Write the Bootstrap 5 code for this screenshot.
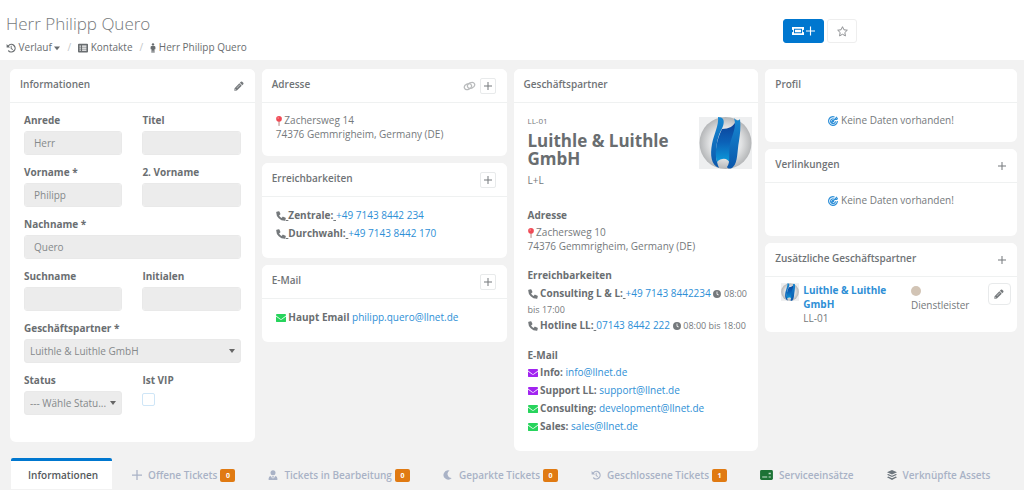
<!DOCTYPE html>
<html lang="de">
<head>
<meta charset="utf-8">
<meta name="viewport" content="width=device-width, initial-scale=1">
<title>Herr Philipp Quero</title>
<link rel="stylesheet" href="https://cdn.jsdelivr.net/npm/bootstrap@5.3.0/dist/css/bootstrap.min.css">
<style>
body{font-family:"Open Sans",sans-serif;font-size:10px;line-height:14px;color:#75797c;background:#f2f2f2}
a{color:#2e8fd6;text-decoration:none}
button{color:inherit}
strong,.form-label,.sub-title{font-weight:700;color:#6a6e71}
.ico{width:10px;height:10px;fill:currentColor;vertical-align:-2px;flex:none}
.ico-slim{width:6px}
.ico-small{width:8px}
.ico-wide{width:13px}
.page-head{background:#fff;height:60px;padding:12px 167px 0 6px}
.page-title{font-size:17px;line-height:24px;font-weight:300;color:#75797c;margin:0}
.breadcrumb{font-size:10px;line-height:16px;margin:3px 0 0;--bs-breadcrumb-item-padding-x:7px;--bs-breadcrumb-divider-color:#c3c6c8}
.breadcrumb a,.breadcrumb-item.active{color:#696d70}
.head-actions{gap:3px}
.head-btn{height:24px;padding:0;border-radius:3px;margin-top:7px;display:flex;align-items:center;justify-content:center}
.head-ticket{width:41px;background:#0077cf;border-color:#0077cf;color:#fff;gap:2px}
.head-ticket .ico{width:12px}
.head-ticket .ico-small{width:9px}
.head-star{width:30px;background:#fff;border-color:#eee;color:#8a8d90}
.head-star .ico{width:11px;height:11px}
.board{padding:9px 7px 0 10px}
.board-col{padding-right:7px}
.board-col:last-child{padding-right:0}
.panel{border:0;border-radius:6px;margin-bottom:7px;color:inherit}
.panel>.card-header{background:#fff;border-bottom:1px solid #eff1f1;border-radius:6px 6px 0 0;height:34px;padding:0 11px 0 10px;display:flex;align-items:center;gap:4px}
.panel h2{font-size:10px;line-height:16px;font-weight:600;color:#6f7376;margin:0 auto 4px 0}
.panel>.card-body{padding:10px 14px 15px}
.panel>.card-body.contact-lines{padding:9px 14px 16px;line-height:18px}
.panel>.card-body.form-body{padding:9px 14px 27px}
.panel>.card-body.partner-body{padding:11px 6px 16px 14px}
.panel>.card-body.empty-tall{padding-bottom:29px}
.icon-btn{height:16px;padding:0;border:0;background:none;display:flex;align-items:center;justify-content:center}
.boxed{width:16px;border:1px solid #e8eaeb;border-radius:2px}
.fields{row-gap:9px;--bs-gutter-x:20px}
.form-label{display:block;margin:0 0 3px;line-height:16px}
.form-control,.form-select{height:24px;min-height:24px;font-size:10px;line-height:16px;padding:3px 9px;border:1px solid #e9e9e9;border-radius:3px;background-color:#ececec;color:#85898b}
.form-select{padding:3px 14px 3px 5px;background-size:6px 4px;background-position:right 5px center;background-image:url("data:image/svg+xml,%3Csvg xmlns='http://www.w3.org/2000/svg' viewBox='0 0 6 4'%3E%3Cpath fill='%23666' d='M0 0h6L3 4z'/%3E%3C/svg%3E")}
.form-check-input{width:13px;height:13px;margin:5px 0 0;border-color:#cfe6f7;border-radius:2px!important;display:block}
.mail-lines{line-height:18px}
.phone-lines{line-height:16px;margin:2px 0 14px}
.green{color:#27d45c}.purple{color:#a124f0}.red{color:#ef4a55}
.code{font-size:8px}
.hours{font-size:9px;line-height:12px}
.company{font-size:17px;line-height:18px;font-weight:700;color:#696d70;margin:4px 0 5px}
.partner-top{margin-bottom:20px}
.partner-address{margin:2px 0 14px}
.logo-lg{width:53px;height:52px;flex:none;margin-top:3px}
.logo-sm{width:18px;height:18px;flex:none;margin-right:4px}
.sub-title{font-size:10px;line-height:16px;margin:0}
.extra{padding:6px 6px 7px 16px}
.dot{width:10px;height:10px;border-radius:50%;background:#d2c4b5;margin:3px 0 2px}
.edit-btn{width:24px;height:22px;border:1px solid #e8eaeb;border-radius:4px;background:#fff;padding:0;display:flex;align-items:center;justify-content:center}
.tabs{padding-left:11px;border:0;flex-wrap:nowrap}
.tabs .nav-link{height:31px;border:0;border-top:3px solid transparent;border-radius:2px 2px 0 0;margin:0;padding:0 16px 0 17px;font-weight:600;color:#a9b2c6;white-space:nowrap;display:flex;align-items:center}
.tabs .nav-link.active{padding:0 14px 0 17px;margin-right:3px;background:#fff;color:#55595c;border-top-color:#0077cf}
.tabs .ico{margin-right:6px}
.tabs .badge{background:#e07a12;border-radius:2px;font-size:7px;line-height:13px;width:15px;padding:0;margin-left:3px}
</style>
</head>
<body>
<svg class="position-absolute" width="0" height="0" aria-hidden="true">
<defs>
<radialGradient id="silver" cx=".5" cy=".5" r=".55"><stop offset="0" stop-color="#fff"/><stop offset=".55" stop-color="#e2e3e4"/><stop offset="1" stop-color="#a9abad"/></radialGradient>
<linearGradient id="deep" x1="0" y1="0" x2="0" y2="1"><stop offset="0" stop-color="#0c3f96"/><stop offset=".5" stop-color="#0b62b8"/><stop offset="1" stop-color="#0da0de"/></linearGradient>
<linearGradient id="edge" x1="0" y1="0" x2="0" y2="1"><stop offset="0" stop-color="#1688d2"/><stop offset="1" stop-color="#0b57ab"/></linearGradient>
</defs>
<symbol id="history" viewBox="0 0 16 16"><path d="M3.200 3.800A7 7 0 1 1 3 12.600l1.400-1.400a5 5 0 1 0 .2-6L6.500 7H1V1.500zM7.500 4.500H9v3.700l2.300 1.600-.9 1.300-2.900-2.100z"/></symbol>
<symbol id="list" viewBox="0 0 16 14"><path fill-rule="evenodd" d="M1.500 0h13A1.500 1.500 0 0 1 16 1.500v11a1.500 1.500 0 0 1-1.500 1.500h-13A1.500 1.500 0 0 1 0 12.500v-11A1.500 1.500 0 0 1 1.500 0zM2.500 3v2h2V3zm4 0v2h7V3zm-4 3.200v2h2v-2zm4 0v2h7v-2zm-4 3.200v2h2v-2zm4 0v2h7v-2z"/></symbol>
<symbol id="person" viewBox="0 0 10 16"><circle cx="5" cy="2" r="2"/><path d="M3 4.500h4a2 2 0 0 1 2 2V10H7.500v6h-2v-4h-1v4h-2v-6H1V6.500a2 2 0 0 1 2-2z"/></symbol>
<symbol id="caret" viewBox="0 0 8 10"><path d="M0 3h8L4 8z"/></symbol>
<symbol id="pencil" viewBox="0 0 16 16"><path fill-rule="evenodd" d="M11 1.200a1.500 1.500 0 0 1 2.100 0l1.700 1.700a1.500 1.500 0 0 1 0 2.100l-1.600 1.600-3.800-3.800zM8.600 3.600l3.800 3.800-7.800 7.800L.5 15.600l.4-4.200zM2.200 12.500l-.2 1.500 1.500-.2zM4.200 10.800l4.800-4.800.5.500-4.800 4.800z"/></symbol>
<symbol id="plus" viewBox="0 0 16 16"><path d="M7 0h2v7h7v2H9v7H7V9H0V7h7z"/></symbol>
<symbol id="link" viewBox="0 0 20 16"><g fill="none" stroke="currentColor" stroke-width="2"><ellipse cx="7.500" cy="9" rx="6" ry="4.300" transform="rotate(-25 7.500 9)"/><ellipse cx="12.500" cy="7" rx="6" ry="4.300" transform="rotate(-25 12.500 7)"/></g></symbol>
<symbol id="pin" viewBox="0 0 8 14"><path d="M3.300 7h1.500v6.500l-.8.500-.7-.5z" fill="#b98b86"/><circle cx="4" cy="4" r="4"/><circle cx="2.800" cy="2.800" r="1" fill="#ff9b9f"/></symbol>
<symbol id="phone" viewBox="0 0 16 16"><path d="M1 1.200 4.500.3a.8.800 0 0 1 .9.500L7 4.500a.8.800 0 0 1-.2.900L4.900 7A12 12 0 0 0 9 11.100l1.600-1.900a.8.800 0 0 1 .9-.2l3.700 1.600a.8.800 0 0 1 .5.900L14.800 15a.8.800 0 0 1-.8.700A13.700 13.700 0 0 1 .3 2a.8.800 0 0 1 .7-.8z"/></symbol>
<symbol id="mail" viewBox="0 0 16 13"><path d="M0 1.500A1.500 1.500 0 0 1 1.500 0h13A1.500 1.500 0 0 1 16 1.500v1L9.300 7.500a2.200 2.200 0 0 1-2.600 0L0 2.500zM0 4l6 4.500a3.400 3.400 0 0 0 4 0L16 4v7.500a1.500 1.500 0 0 1-1.500 1.500h-13A1.500 1.500 0 0 1 0 11.500z"/></symbol>
<symbol id="clock" viewBox="0 0 16 16"><path fill-rule="evenodd" d="M8 0a8 8 0 1 1 0 16A8 8 0 0 1 8 0zM7.200 3v5.500l3.400 2.400.9-1.300L8.800 7.700V3z"/></symbol>
<symbol id="target" viewBox="0 0 16 16"><g fill="none" stroke="#2d8fd8" stroke-width="1.900"><path d="M10.500 1.500A7 7 0 1 0 15 8"/><path d="M9 4.500A3.900 3.900 0 1 0 12 8.500M4.500 8.500l3 3M8 8l6.500-6.500M10.500 5.500h3.500l1.500-2"/><circle cx="8" cy="8" r="1"/></g></symbol>
<symbol id="star" viewBox="0 0 16 16"><path fill="none" stroke="currentColor" stroke-width="1.400" stroke-linejoin="round" d="m8 1 2.100 4.500 4.900.6-3.600 3.400.9 4.900L8 12l-4.300 2.400.9-4.900L1 6.100l4.900-.6z"/></symbol>
<symbol id="ticket" viewBox="0 0 18 12"><path fill-rule="evenodd" d="M0 0h18v4a2 2 0 0 0 0 4v4H0V8a2 2 0 0 0 0-4zM3 2.500v7h12v-7zM4.500 4h9v4h-9z"/></symbol>
<symbol id="user" viewBox="0 0 16 16"><circle cx="8" cy="4.200" r="4"/><path d="M1 16v-2.500A4 4 0 0 1 4.500 9.600L7 14l.4-3L6.500 9.500h3L8.600 11l.4 3 2.500-4.400A4 4 0 0 1 15 13.500V16z"/></symbol>
<symbol id="moon" viewBox="0 0 16 16"><path d="M10.500.7A6.500 6.500 0 0 0 14 12.800 7.500 7.500 0 1 1 10.500.7z"/></symbol>
<symbol id="card-green" viewBox="0 0 18 14"><rect width="18" height="14" rx="2" fill="#1d7335"/><path d="M3 9h7v1.500H3zm9-5h3v2h-3zm0 5h3v1.500h-3z" fill="#c9e3cf"/></symbol>
<symbol id="layers" viewBox="0 0 16 16"><path d="m8 0 8 3.600-8 3.700-8-3.700zM2 6.500l6 2.700 6-2.700 2 1-8 3.700-8-3.700zm0 4 6 2.700 6-2.700 2 1L8 15.800l-8-4.300z"/></symbol>
<symbol id="logo" viewBox="0 0 53 52"><rect width="53" height="52" fill="#eeeff0"/><circle cx="26.500" cy="26" r="26" fill="url(#silver)"/><path d="M19 0C24 0 26 3 24 9C23 12 21 15 20 18C16 30 16 42 20 51C12 48 11 38 13 27C15 17 20 8 19 0Z" fill="url(#edge)"/><path d="M23 12C30 12 35 9 37 4L38 14L31 47C29 40 22 41 18 45C15 35 18 22 23 12Z" fill="url(#deep)"/><path d="M35 1C37 4 40 4 41 2C42 10 41 17 40 24C38 35 39 45 34 50C32 52 29 52 28 50C32 45 29 37 31 27C33 18 38 10 35 1Z" fill="url(#edge)"/></symbol>
</svg>

<header class="page-head d-flex justify-content-between">
  <div>
    <h1 class="page-title">Herr Philipp Quero</h1>
    <nav aria-label="Verlauf">
      <ol class="breadcrumb">
        <li class="breadcrumb-item"><a href="#"><svg class="ico"><use href="#history"/></svg> Verlauf <svg class="ico ico-slim"><use href="#caret"/></svg></a></li>
        <li class="breadcrumb-item"><a href="#"><svg class="ico"><use href="#list"/></svg> Kontakte</a></li>
        <li class="breadcrumb-item active" aria-current="page"><svg class="ico ico-slim"><use href="#person"/></svg> Herr Philipp Quero</li>
      </ol>
    </nav>
  </div>
  <div class="d-flex head-actions">
    <button type="button" class="btn head-btn head-ticket" aria-label="Neues Ticket"><svg class="ico"><use href="#ticket"/></svg><svg class="ico ico-small"><use href="#plus"/></svg></button>
    <button type="button" class="btn head-btn head-star" aria-label="Favorit"><svg class="ico"><use href="#star"/></svg></button>
  </div>
</header>

<main>
  <div class="board">
    <div class="row g-0">
      <div class="col-3 board-col">
        <section class="card panel">
          <div class="card-header"><h2>Informationen</h2><button type="button" class="icon-btn" aria-label="Bearbeiten"><svg class="ico"><use href="#pencil"/></svg></button></div>
          <form class="card-body form-body">
            <div class="row fields">
              <div class="col-6"><label class="form-label" for="anrede">Anrede</label><input class="form-control" id="anrede" value="Herr"></div>
              <div class="col-6"><label class="form-label" for="titel">Titel</label><input class="form-control" id="titel"></div>
              <div class="col-6"><label class="form-label" for="vorname">Vorname *</label><input class="form-control" id="vorname" value="Philipp"></div>
              <div class="col-6"><label class="form-label" for="vorname2">2. Vorname</label><input class="form-control" id="vorname2"></div>
              <div class="col-12"><label class="form-label" for="nachname">Nachname *</label><input class="form-control" id="nachname" value="Quero"></div>
              <div class="col-6"><label class="form-label" for="suchname">Suchname</label><input class="form-control" id="suchname"></div>
              <div class="col-6"><label class="form-label" for="initialen">Initialen</label><input class="form-control" id="initialen"></div>
              <div class="col-12"><label class="form-label" for="partner">Geschäftspartner *</label><select class="form-select" id="partner"><option>Luithle &amp; Luithle GmbH</option></select></div>
              <div class="col-6"><label class="form-label" for="status">Status</label><select class="form-select" id="status"><option>--- Wähle Statu...</option></select></div>
              <div class="col-6"><label class="form-label" for="vip">Ist VIP</label><input type="checkbox" class="form-check-input" id="vip"></div>
            </div>
          </form>
        </section>
      </div>

      <div class="col-3 board-col">
        <section class="card panel">
          <div class="card-header"><h2>Adresse</h2><button type="button" class="icon-btn opacity-50" aria-label="Verknüpfen"><svg class="ico ico-wide"><use href="#link"/></svg></button><button type="button" class="icon-btn boxed" aria-label="Adresse hinzufügen"><svg class="ico ico-small"><use href="#plus"/></svg></button></div>
          <div class="card-body"><svg class="ico ico-slim red"><use href="#pin"/></svg> Zachersweg 14<br>74376 Gemmrigheim, Germany (DE)</div>
        </section>
        <section class="card panel">
          <div class="card-header"><h2>Erreichbarkeiten</h2><button type="button" class="icon-btn boxed" aria-label="Nummer hinzufügen"><svg class="ico ico-small"><use href="#plus"/></svg></button></div>
          <div class="card-body contact-lines">
            <div><svg class="ico"><use href="#phone"/></svg><u> </u><strong>Zentrale:</strong><u> </u><a href="#">+49 7143 8442 234</a></div>
            <div><svg class="ico"><use href="#phone"/></svg><u> </u><strong>Durchwahl:</strong><u> </u><a href="#">+49 7143 8442 170</a></div>
          </div>
        </section>
        <section class="card panel">
          <div class="card-header"><h2>E-Mail</h2><button type="button" class="icon-btn boxed" aria-label="E-Mail hinzufügen"><svg class="ico ico-small"><use href="#plus"/></svg></button></div>
          <div class="card-body contact-lines"><svg class="ico green"><use href="#mail"/></svg> <strong>Haupt Email</strong> <a href="#">philipp.quero@llnet.de</a></div>
        </section>
      </div>

      <div class="col-3 board-col">
        <section class="card panel">
          <div class="card-header"><h2>Geschäftspartner</h2></div>
          <div class="card-body partner-body">
            <div class="d-flex justify-content-between partner-top">
              <div><div class="code">LL-01</div><h3 class="company">Luithle &amp; Luithle GmbH</h3><div>L+L</div></div>
              <svg class="logo-lg" role="img" aria-label="Luithle"><use href="#logo"/></svg>
            </div>
            <h4 class="sub-title">Adresse</h4>
            <div class="partner-address"><svg class="ico ico-slim red"><use href="#pin"/></svg> Zachersweg 10<br>74376 Gemmrigheim, Germany (DE)</div>
            <h4 class="sub-title">Erreichbarkeiten</h4>
            <div class="phone-lines">
              <div><svg class="ico"><use href="#phone"/></svg> <strong>Consulting L &amp; L:</strong><u> </u><a href="#">+49 7143 8442234</a> <svg class="ico ico-small"><use href="#clock"/></svg> <span class="hours">08:00 bis 17:00</span></div>
              <div><svg class="ico"><use href="#phone"/></svg> <strong>Hotline LL:</strong><u> </u><a href="#">07143 8442 222</a> <svg class="ico ico-small"><use href="#clock"/></svg> <span class="hours">08:00 bis 18:00</span></div>
            </div>
            <h4 class="sub-title">E-Mail</h4>
            <div class="mail-lines">
              <div><svg class="ico purple"><use href="#mail"/></svg> <strong>Info:</strong> <a href="#">info@llnet.de</a></div>
              <div><svg class="ico purple"><use href="#mail"/></svg> <strong>Support LL:</strong> <a href="#">support@llnet.de</a></div>
              <div><svg class="ico green"><use href="#mail"/></svg> <strong>Consulting:</strong> <a href="#">development@llnet.de</a></div>
              <div><svg class="ico green"><use href="#mail"/></svg> <strong>Sales:</strong> <a href="#">sales@llnet.de</a></div>
            </div>
          </div>
        </section>
      </div>

      <div class="col-3 board-col">
        <section class="card panel">
          <div class="card-header"><h2>Profil</h2></div>
          <div class="card-body text-center"><svg class="ico"><use href="#target"/></svg> Keine Daten vorhanden!</div>
        </section>
        <section class="card panel">
          <div class="card-header"><h2>Verlinkungen</h2><button type="button" class="icon-btn" aria-label="Verlinkung hinzufügen"><svg class="ico ico-small"><use href="#plus"/></svg></button></div>
          <div class="card-body text-center empty-tall"><svg class="ico"><use href="#target"/></svg> Keine Daten vorhanden!</div>
        </section>
        <section class="card panel">
          <div class="card-header"><h2>Zusätzliche Geschäftspartner</h2><button type="button" class="icon-btn" aria-label="Geschäftspartner hinzufügen"><svg class="ico ico-small"><use href="#plus"/></svg></button></div>
          <div class="d-flex extra">
            <svg class="logo-sm" role="img" aria-label="Luithle"><use href="#logo"/></svg>
            <div class="row g-0 flex-fill">
              <div class="col-7 pe-3"><a href="#" class="fw-bold">Luithle &amp; Luithle GmbH</a><div>LL-01</div></div>
              <div class="col-5"><div class="dot"></div>Dienstleister</div>
            </div>
            <button type="button" class="edit-btn" aria-label="Bearbeiten"><svg class="ico"><use href="#pencil"/></svg></button>
          </div>
        </section>
      </div>
    </div>
  </div>

  <ul class="nav nav-tabs tabs">
    <li class="nav-item"><a class="nav-link active" href="#">Informationen</a></li>
    <li class="nav-item"><a class="nav-link" href="#"><svg class="ico"><use href="#plus"/></svg>Offene Tickets<span class="badge">0</span></a></li>
    <li class="nav-item"><a class="nav-link" href="#"><svg class="ico"><use href="#user"/></svg>Tickets in Bearbeitung<span class="badge">0</span></a></li>
    <li class="nav-item"><a class="nav-link" href="#"><svg class="ico"><use href="#moon"/></svg>Geparkte Tickets<span class="badge">0</span></a></li>
    <li class="nav-item"><a class="nav-link" href="#"><svg class="ico"><use href="#history"/></svg>Geschlossene Tickets<span class="badge">1</span></a></li>
    <li class="nav-item"><a class="nav-link" href="#"><svg class="ico ico-wide"><use href="#card-green"/></svg>Serviceeinsätze</a></li>
    <li class="nav-item"><a class="nav-link" href="#"><svg class="ico text-secondary"><use href="#layers"/></svg>Verknüpfte Assets</a></li>
  </ul>
</main>
<script src="https://cdn.jsdelivr.net/npm/bootstrap@5.3.0/dist/js/bootstrap.bundle.min.js"></script>
</body>
</html>
